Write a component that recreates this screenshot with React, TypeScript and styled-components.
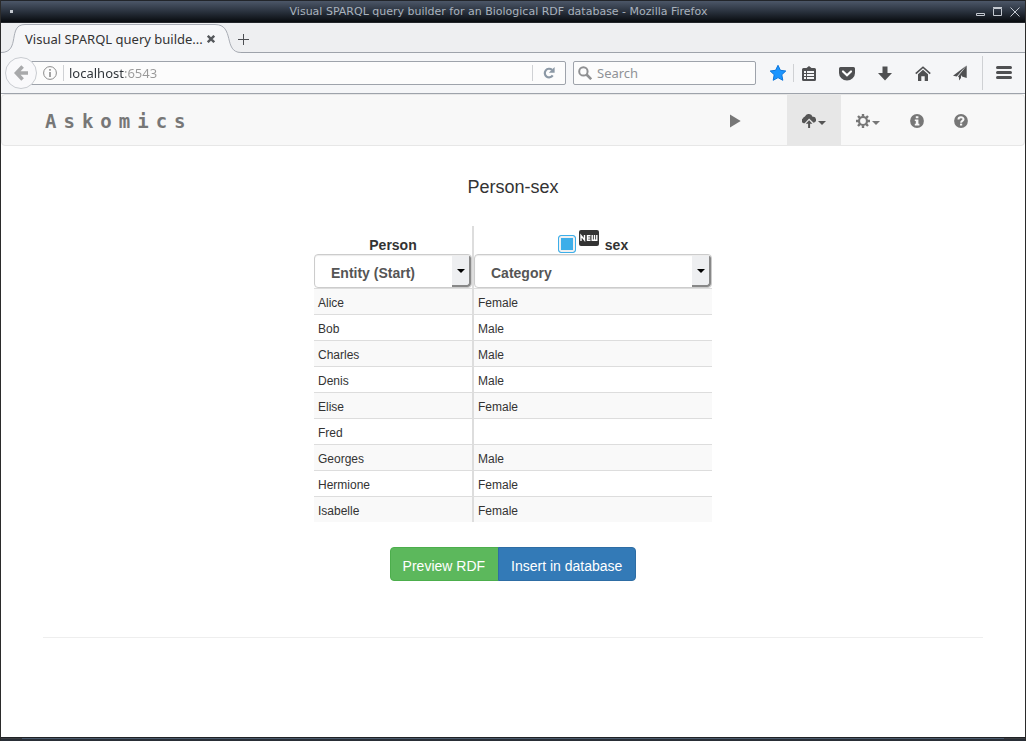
import React from "react";
import styled, { createGlobalStyle } from "styled-components";

const GlobalStyle = createGlobalStyle`
  * { box-sizing: border-box; }
  body {
    margin: 0;
    background: #fff;
    color: #333;
    font: 14px/20px "Liberation Sans", Arial, sans-serif;
  }
  button, input, select { font: inherit; color: inherit; }
  svg { display: block; flex: none; }
`;

const Window = styled.div`
  display: flex;
  flex-direction: column;
  min-height: 100vh;
  background: #fff;
  border: solid #2b2b2b;
  border-width: 0 1px;
`;

/* Window title bar */

const TitleBar = styled.header`
  display: flex;
  align-items: center;
  height: 23px;
  padding: 0 5px 0 9px;
  background: linear-gradient(#4c5768, #2a323e 50%, #080b0f);
  border: solid #22252a;
  border-width: 1px 0;
`;

const WindowMark = styled.span`
  width: 3px;
  height: 3px;
  margin-right: 8px;
  background: #c4c9d0;
`;

const WindowTitle = styled.h1`
  flex: 1;
  margin: 0;
  overflow: hidden;
  color: #a9b2bd;
  font: 11px/20px "DejaVu Sans", sans-serif;
  text-align: center;
  white-space: nowrap;
`;

const WindowButtons = styled.div`
  display: flex;
  gap: 7px;
`;

const IconButton = styled.button`
  display: flex;
  align-items: center;
  justify-content: center;
  padding: 0;
  background: none;
  border: 0;
  cursor: pointer;
`;

/* Tab strip */

const TabStrip = styled.div`
  display: flex;
  height: 30px;
  background: #eeeff1;
  box-shadow: inset 0 -1px #9ea3ab;
`;

const Tab = styled.div`
  display: flex;
  height: 30px;
`;

const TabFace = styled.div`
  display: flex;
  align-items: center;
  justify-content: space-between;
  width: 190px;
  margin-top: 1px;
  color: #333;
  background: #f5f6f8;
  border-top: 1px solid #a9adb5;
  font: 13px/18px "Noto Sans", sans-serif;
`;

const TabTitle = styled.span`
  white-space: nowrap;
`;

const TabClose = styled(IconButton)`
  width: 16px;
  height: 16px;
  margin-right: -4px;
`;

const NewTab = styled(IconButton)`
  width: 24px;
  padding-top: 2px;
  margin-left: -10px;
`;

/* Navigation toolbar */

const Toolbar = styled.div`
  display: flex;
  align-items: center;
  height: 41px;
  padding: 0 8px 0 4px;
  background: #f5f6f8;
  border-bottom: 1px solid #9ea3ab;
`;

const BackButton = styled(IconButton)`
  position: relative;
  width: 32px;
  height: 32px;
  margin-right: -8px;
  background: #f9f9fb;
  border: 1px solid #c9ccd1;
  border-radius: 50%;
`;

const Field = styled.div`
  display: flex;
  align-items: center;
  height: 24px;
  background: #fcfcfc;
  border: 1px solid #9ea3ab;
  border-radius: 2px;
`;

const AddressField = styled(Field)`
  flex: 1;
  min-width: 0;
  padding-left: 13px;
  margin-right: 7px;
`;

const SearchField = styled(Field)`
  width: 183px;
  padding-left: 4px;
  margin-right: 11px;
`;

const Divider = styled.span<{ $height: number; $before?: number; $after?: number }>`
  width: 1px;
  height: ${(p) => p.$height}px;
  margin: 0 ${(p) => p.$after ?? 0}px 0 ${(p) => p.$before ?? 0}px;
  background: #cfd1d4;
`;

const TextInput = styled.input`
  flex: 1;
  min-width: 0;
  height: 20px;
  padding: 0 5px;
  background: none;
  border: 0;
  outline: 0;
  font: 13px/20px "Noto Sans", sans-serif;
  &::placeholder { color: #8f9297; opacity: 1; }
`;

const AddressInput = styled(TextInput)`
  color: transparent;
  background: linear-gradient(90deg, #2e3338 60px, #999 60px);
  background-clip: text;
  -webkit-background-clip: text;
`;

const ReloadButton = styled(IconButton)`
  width: 32px;
  height: 20px;
`;

const ToolButton = styled(IconButton)<{ $width: number }>`
  width: ${(p) => p.$width}px;
  height: 40px;
  color: #4f5052;
`;

/* Application navigation bar */

const Navbar = styled.nav`
  display: flex;
  align-items: center;
  justify-content: space-between;
  height: 52px;
  padding: 0 41px 0 43px;
  background: #f8f8f8;
  border: 1px solid #e7e7e7;
  border-radius: 4px;
`;

const Brand = styled.a`
  padding-top: 2px;
  color: #777;
  font: bold 19px/20px "DejaVu Sans Mono", monospace;
  letter-spacing: 7px;
  text-decoration: none;
`;

const NavItems = styled.div`
  display: flex;
`;

const NavButton = styled(IconButton)<{ $active?: boolean; $spaced?: boolean }>`
  gap: 2px;
  height: 50px;
  padding: 2px 15px 0;
  margin-right: ${(p) => (p.$spaced ? 30 : 0)}px;
  color: ${(p) => (p.$active ? "#555" : "#777")};
  background: ${(p) => (p.$active ? "#e7e7e7" : "transparent")};
`;

const Caret = styled.span`
  width: 8px;
  border: solid transparent;
  border-width: 4px 4px 0;
  border-top-color: currentColor;
  margin-top: 3px;
`;

/* Page content */

const Content = styled.main`
  display: flex;
  flex: 1;
  flex-direction: column;
  align-items: center;
  padding: 31px 42px 0;
`;

const Heading = styled.h2`
  margin: 0 0 29px;
  color: #333;
  font-size: 18px;
  font-weight: 400;
  line-height: 20px;
`;

const DataTable = styled.table`
  border-collapse: separate;
  border-spacing: 0;
  font-size: 12px;
  line-height: 17px;
`;

const HeadCell = styled.th<{ $width: number }>`
  width: ${(p) => p.$width}px;
  padding: 0;
  font-size: 14px;
  line-height: 20px;
  vertical-align: bottom;
  & + & { border-left: 2px solid #ddd; }
`;

const HeadLabel = styled.label`
  display: flex;
  align-items: center;
  justify-content: center;
  height: 28px;
  padding-top: 10px;
`;

const Checkbox = styled.input`
  width: 18px;
  height: 18px;
  margin: -2px 3px 0 0;
  appearance: none;
  border: 1px solid #3daee9;
  border-radius: 3px;
  &:checked {
    background: #3daee9;
    box-shadow: inset 0 0 0 2px #eff0f1;
  }
`;

const NewIcon = styled.svg`
  margin: -14px 6px 0 0;
`;

const SelectBox = styled.div`
  position: relative;
  height: 34px;
`;

const Select = styled.select`
  display: block;
  width: 100%;
  height: 34px;
  padding: 4px 36px 0 16px;
  appearance: none;
  color: #555;
  background: #fff;
  border: 1px solid #ccc;
  border-radius: 4px;
  box-shadow: inset 0 1px 1px rgba(0, 0, 0, 0.08);
  font-weight: 700;
`;

const SelectArrow = styled.span`
  position: absolute;
  top: 2px;
  right: 1px;
  display: flex;
  align-items: center;
  justify-content: center;
  width: 19px;
  height: 31px;
  background: #eeeff1;
  border: solid #888;
  border-width: 0 2px 2px 0;
  border-radius: 0 2px 4px 0;
  pointer-events: none;
`;

const SelectCaret = styled.span`
  border: solid transparent;
  border-width: 4px 4px 0;
  border-top-color: #000;
`;

const Row = styled.tr`
  &:nth-child(odd) { background: #f9f9f9; }
`;

const Cell = styled.td`
  height: 26px;
  padding: 6px 4px 2px;
  border-top: 1px solid #ddd;
  & + & { border-left: 2px solid #ddd; }
`;

const ButtonGroup = styled.div`
  display: flex;
  margin-top: 25px;
`;

const ActionButton = styled.button<{ $primary?: boolean }>`
  height: 34px;
  padding: 4px 13px 0 12px;
  color: #fff;
  background: ${(p) => (p.$primary ? "#337ab7" : "#5cb85c")};
  border: 1px solid ${(p) => (p.$primary ? "#2e6da4" : "#4cae4c")};
  border-radius: ${(p) => (p.$primary ? "0 4px 4px 0" : "4px 0 0 4px")};
  cursor: pointer;
  & + & { margin-left: -1px; }
`;

const Rule = styled.hr`
  width: 100%;
  margin: 56px 0 20px;
  border: 0;
  border-top: 1px solid #eee;
`;

const BottomEdge = styled.footer`
  display: flex;
  height: 4px;
  background: #292e36;
  border-top: 1px solid #202225;
`;

const Grip = styled.span<{ $corner?: boolean }>`
  flex: ${(p) => (p.$corner ? "0 0 21px" : "1")};
  border-top: 1px solid ${(p) => (p.$corner ? "#3a3c3f" : "#4b5b6e")};
`;

const rows = [
  ["Alice", "Female"],
  ["Bob", "Male"],
  ["Charles", "Male"],
  ["Denis", "Male"],
  ["Elise", "Female"],
  ["Fred", ""],
  ["Georges", "Male"],
  ["Hermione", "Female"],
  ["Isabelle", "Female"],
];

function ColumnSelect({ label, options }: { label: string; options: string[] }) {
  return (
    <SelectBox>
      <Select aria-label={label}>
        {options.map((o) => (
          <option key={o}>{o}</option>
        ))}
      </Select>
      <SelectArrow aria-hidden="true">
        <SelectCaret />
      </SelectArrow>
    </SelectBox>
  );
}

function BrowserToolbar() {
  return (
    <Toolbar>
      <BackButton aria-label="Back">
        <svg width="14" height="16" viewBox="0 0 14 16" fill="none" stroke="#a8a9ab" strokeWidth="3.6">
          <path d="M8.6 1.4 2.4 8l6.2 6.6M3 8h11" />
        </svg>
      </BackButton>
      <AddressField>
        <svg width="14" height="14" viewBox="0 0 14 14" fill="none" stroke="#8c8c8c">
          <circle cx="7" cy="7" r="6.4" />
          <path d="M7 6v5M7 3v1.8" strokeWidth="1.6" />
        </svg>
        <Divider $height={16} $before={6} />
        <AddressInput aria-label="Address" defaultValue="localhost:6543" />
        <Divider $height={16} />
        <ReloadButton aria-label="Reload">
          <svg width="12" height="12" viewBox="0 0 12 12">
            <path d="M9.7 8.4A4.3 4.3 0 1 1 9 2.9" fill="none" stroke="#8b98a5" strokeWidth="2.2" />
            <path d="M11.6 0v5.8H5.8z" fill="#8b98a5" />
          </svg>
        </ReloadButton>
      </AddressField>
      <SearchField>
        <svg width="14" height="14" viewBox="0 0 14 14" fill="none" stroke="#8f9092">
          <circle cx="5.4" cy="5.4" r="4.2" strokeWidth="2" />
          <path d="m8.5 8.5 4.7 4.7" strokeWidth="2.6" />
        </svg>
        <TextInput type="search" aria-label="Search" placeholder="Search" />
      </SearchField>
      <ToolButton aria-label="Bookmark this page" $width={22}>
        <svg width="18" height="18" viewBox="0 0 18 18">
          <path d="m9 1.3 2.4 5 5.4.7-4 3.7 1 5.6L9 13.6l-4.8 2.7 1-5.6-4-3.7 5.4-.7z" fill="#1b95ff" stroke="#0c76dc" />
        </svg>
      </ToolButton>
      <Divider $height={18} $before={4} />
      <ToolButton aria-label="Bookmarks" $width={30}>
        <svg width="14" height="15" viewBox="0 0 14 15">
          <path
            fill="currentColor"
            fillRule="evenodd"
            d="M1.5 2h3L7 0l2.5 2h3A1.5 1.5 0 0 1 14 3.5v10a1.5 1.5 0 0 1-1.5 1.5h-11A1.5 1.5 0 0 1 0 13.5v-10A1.5 1.5 0 0 1 1.5 2zM2 5v2h2V5zm3 0v2h7V5zM2 8v2h2V8zm3 0v2h7V8zm-3 3v2h2v-2zm3 0v2h7v-2z"
          />
        </svg>
      </ToolButton>
      <ToolButton aria-label="Save to Pocket" $width={46}>
        <svg width="16" height="15" viewBox="0 0 16 15">
          <path d="M1.5 1h13A1.5 1.5 0 0 1 16 2.5V7a8 7.5 0 0 1-16 0V2.5A1.5 1.5 0 0 1 1.5 1z" fill="currentColor" />
          <path d="M4 5.5 8 9.3l4-3.8" fill="none" stroke="#fff" strokeWidth="2.2" strokeLinecap="round" />
        </svg>
      </ToolButton>
      <ToolButton aria-label="Downloads" $width={30}>
        <svg width="14" height="15" viewBox="0 0 14 15">
          <path d="M4.5.5h5V7H14l-7 7.5L0 7h4.5z" fill="currentColor" />
        </svg>
      </ToolButton>
      <ToolButton aria-label="Home" $width={46}>
        <svg width="16" height="15" viewBox="0 0 16 15">
          <path d="m8 .2 7.8 6.9-1.1 1.1L8 2.3 1.3 8.2.2 7.1z" fill="currentColor" />
          <path d="m8 3.8 5 4.4V15H9.7v-4.7H6.3V15H3V8.2z" fill="currentColor" />
        </svg>
      </ToolButton>
      <ToolButton aria-label="Share" $width={28}>
        <svg width="14" height="16" viewBox="0 0 14 16">
          <path d="M13.5.5 0 10.8l3.8.8z" fill="currentColor" />
          <path d="m13.7.5-8.700 11 1 .9v3.100l2-2.500v-3l1 1.500 4.700 1.500z" fill="currentColor" />
        </svg>
      </ToolButton>
      <Divider $height={34} $before={8} $after={8} />
      <ToolButton aria-label="Menu" $width={26}>
        <svg width="16" height="14" viewBox="0 0 16 14" stroke="currentColor" strokeWidth="3" strokeLinecap="round">
          <path d="M1.5 1.5h13M1.5 6.500h13M1.5 11.500h13" />
        </svg>
      </ToolButton>
    </Toolbar>
  );
}

function AppNav() {
  return (
    <Navbar>
      <Brand href="#">Askomics</Brand>
      <NavItems>
        <NavButton aria-label="Run" $spaced>
          <svg width="14" height="14" viewBox="0 0 14 14">
            <path d="M2 .5 12.7 7 2 13.5z" fill="currentColor" />
          </svg>
        </NavButton>
        <NavButton aria-label="Upload" $active>
          <svg width="14" height="14" viewBox="0 0 14 14">
            <path d="M2.6 9.200A2.600 2.600 0 0 1 .9 4.400 2.800 2.800 0 0 1 3 2.400 4 4 0 0 1 10.500 2.800 3 3 0 0 1 11.600 8.700L7.100 4.600z" fill="currentColor" />
            <path d="M7.1 6.200 10.400 9.700H8.100V14H6.100V9.700H3.800z" fill="currentColor" />
          </svg>
          <Caret />
        </NavButton>
        <NavButton aria-label="Settings">
          <svg width="14" height="14" viewBox="0 0 14 14" fill="none" stroke="currentColor">
            <circle cx="7" cy="7" r="4" strokeWidth="2.200" />
            <path d="M7 0v2.500M7 11.500V14M0 7h2.500M11.500 7H14M2 2l1.800 1.800M10.200 10.200 12 12M2 12l1.800-1.800M10.200 3.800 12 2" strokeWidth="2.400" />
          </svg>
          <Caret />
        </NavButton>
        <NavButton aria-label="About">
          <svg width="14" height="14" viewBox="0 0 14 14">
            <circle cx="7" cy="7" r="6.9" fill="currentColor" />
            <path d="M5.800 2.300h2.600v2H5.800zM4.800 5.400h3.600v4.400h1v1.700H4.800V9.800h1V7.100h-1z" fill="#f8f8f8" />
          </svg>
        </NavButton>
        <NavButton aria-label="Help">
          <svg width="14" height="14" viewBox="0 0 14 14">
            <circle cx="7" cy="7" r="6.9" fill="currentColor" />
            <path d="M4.500 5.500C4.500 2.600 9.500 2.700 9.500 5.200 9.500 6.900 7.100 6.800 7.100 8.800" fill="none" stroke="#f8f8f8" strokeWidth="2" />
            <path d="M6 9.600h2.200v1.900H6z" fill="#f8f8f8" />
          </svg>
        </NavButton>
      </NavItems>
    </Navbar>
  );
}

export default function App() {
  return (
    <Window>
      <GlobalStyle />
      <TitleBar>
        <WindowMark />
        <WindowTitle>Visual SPARQL query builder for an Biological RDF database - Mozilla Firefox</WindowTitle>
        <WindowButtons>
          <IconButton aria-label="Minimize">
            <svg width="10" height="10" fill="none" stroke="#c4c9d0">
              <path d="M.5 6.5h8v2h-8z" />
            </svg>
          </IconButton>
          <IconButton aria-label="Maximize">
            <svg width="10" height="10" fill="none" stroke="#c4c9d0">
              <path d="M.5 1.5h8v7h-8zM0 .5h9" />
            </svg>
          </IconButton>
          <IconButton aria-label="Close">
            <svg width="10" height="10" fill="none" stroke="#c4c9d0">
              <path d="m.5.5 9 9m0-9-9 9" />
            </svg>
          </IconButton>
        </WindowButtons>
      </TitleBar>

      <TabStrip>
        <Tab>
          <svg width="24" height="30" viewBox="0 0 24 30">
            <path d="M0 30v-.5c20 0 6-28 24-28V30z" fill="#f5f6f8" />
            <path d="M0 29.5c20 0 6-28 24-28" fill="none" stroke="#a9adb5" />
          </svg>
          <TabFace>
            <TabTitle>Visual SPARQL query builde...</TabTitle>
            <TabClose aria-label="Close tab">
              <svg width="8" height="8" viewBox="0 0 8 8" stroke="#55585c" strokeWidth="2.4">
                <path d="m.8.8 6.4 6.4m0-6.4L.8 7.2" />
              </svg>
            </TabClose>
          </TabFace>
          <svg width="26" height="30" viewBox="0 0 26 30">
            <path d="M0 30V1.5c20 0 8 28 26 28v.5z" fill="#f5f6f8" />
            <path d="M0 1.5c20 0 8 28 26 28" fill="none" stroke="#a9adb5" />
          </svg>
        </Tab>
        <NewTab aria-label="New tab">
          <svg width="12" height="12" stroke="#4c4e52" strokeWidth="1">
            <path d="M6.5 1v11M1 6.5h11" />
          </svg>
        </NewTab>
      </TabStrip>

      <BrowserToolbar />
      <AppNav />

      <Content>
        <Heading>Person-sex</Heading>
        <DataTable>
          <thead>
            <tr>
              <HeadCell $width={158}>
                <HeadLabel as="div">Person</HeadLabel>
                <ColumnSelect label="Person column type" options={["Entity (Start)", "Entity"]} />
              </HeadCell>
              <HeadCell $width={240}>
                <HeadLabel>
                  <Checkbox type="checkbox" defaultChecked />
                  <NewIcon width="20" height="16" viewBox="0 0 20 16" aria-hidden="true">
                    <rect width="20" height="16" rx="2" fill="#333" />
                    <path
                      d="M2 11V5.5L5.5 10V5M11.500 5.700h-3v4.600h3M8.500 8h2.800M13.200 5v5.300h4.600V5M15.500 5v5"
                      fill="none"
                      stroke="#fff"
                      strokeWidth="1.4"
                    />
                  </NewIcon>
                  sex
                </HeadLabel>
                <ColumnSelect label="sex column type" options={["Category", "Text", "Numeric"]} />
              </HeadCell>
            </tr>
          </thead>
          <tbody>
            {rows.map(([name, sex]) => (
              <Row key={name}>
                <Cell>{name}</Cell>
                <Cell>{sex}</Cell>
              </Row>
            ))}
          </tbody>
        </DataTable>
        <ButtonGroup>
          <ActionButton>Preview RDF</ActionButton>
          <ActionButton $primary>Insert in database</ActionButton>
        </ButtonGroup>
        <Rule />
      </Content>

      <BottomEdge>
        <Grip $corner />
        <Grip />
        <Grip $corner />
      </BottomEdge>
    </Window>
  );
}
